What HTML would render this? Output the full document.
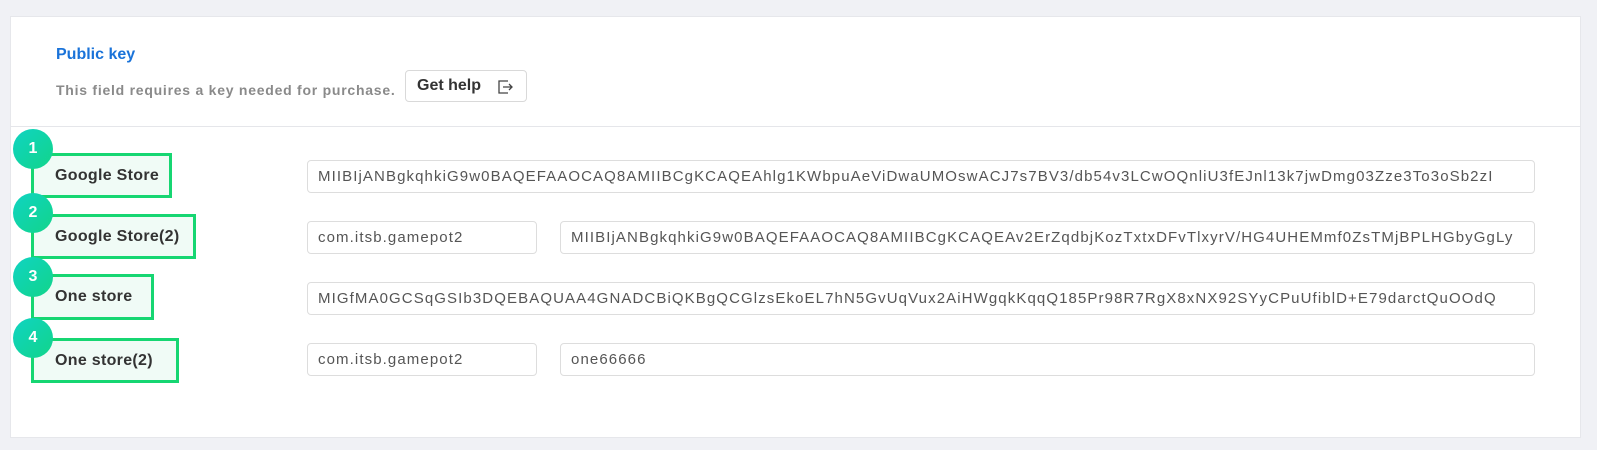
<!DOCTYPE html>
<html><head><meta charset="utf-8"><style>
*{margin:0;padding:0;box-sizing:border-box}
body{width:1597px;height:450px;background:#f0f1f5;font-family:"Liberation Sans",sans-serif;position:relative;overflow:hidden}
.card{position:absolute;left:10px;top:16px;width:1571px;height:422px;background:#fff;border:1px solid #e6e7eb}
.line{position:absolute;left:10px;top:126px;width:1571px;height:1px;background:#e5e6ea}
.t{position:absolute;left:56px;top:46px;font-size:16px;font-weight:bold;color:#1a73d9}
.d{position:absolute;left:56px;top:82px;font-size:14px;font-weight:bold;letter-spacing:0.75px;color:#8a8a8a;white-space:nowrap}
.btn{position:absolute;left:405px;top:70px;width:122px;height:32px;border:1px solid #d9d9d9;border-radius:4px;font-size:16px;font-weight:bold;color:#333;padding:6px 0 0 11px}
.btn svg{position:absolute;right:12px;top:9px}
.box{position:absolute;left:31px;border:3px solid #16d672;background:#f0fbf6;font-size:16px;font-weight:bold;letter-spacing:0.3px;color:#333;padding-left:21px;display:flex;align-items:center;white-space:nowrap}
.c{position:absolute;width:40px;height:40px;border-radius:50%;background:linear-gradient(135deg,#0fd3c2,#12d58a);color:#fff;font-weight:bold;font-size:16px;text-align:center;line-height:40px}
.in{position:absolute;height:33px;border:1px solid #ddd;border-radius:4px;font-size:15px;letter-spacing:1.1px;color:#555;padding:7px 10px 0;white-space:nowrap;overflow:hidden}
</style></head><body>
<div class="card"></div><div class="line"></div>
<div class="t">Public key</div>
<div class="d">This field requires a key needed for purchase.</div>
<div class="btn">Get help<svg width="16" height="14" viewBox="0 0 16 14" fill="none" stroke="#444" stroke-width="1.3"><path d="M10 1H1v12h9M5 7h9M11 4l3 3-3 3"/></svg></div>

<div class="box" style="top:153px;width:141px;height:45px">Google Store</div>
<div class="box" style="top:214px;width:165px;height:45px">Google Store(2)</div>
<div class="box" style="top:274px;width:123px;height:46px">One store</div>
<div class="box" style="top:338px;width:148px;height:45px">One store(2)</div>
<div class="c" style="left:13px;top:129px">1</div>
<div class="c" style="left:13px;top:193px">2</div>
<div class="c" style="left:13px;top:257px">3</div>
<div class="c" style="left:13px;top:318px">4</div>

<div class="in" style="left:307px;top:160px;width:1228px">MIIBIjANBgkqhkiG9w0BAQEFAAOCAQ8AMIIBCgKCAQEAhlg1KWbpuAeViDwaUMOswACJ7s7BV3/db54v3LCwOQnliU3fEJnl13k7jwDmg03Zze3To3oSb2zI</div>
<div class="in" style="left:307px;top:221px;width:230px">com.itsb.gamepot2</div>
<div class="in" style="left:560px;top:221px;width:975px">MIIBIjANBgkqhkiG9w0BAQEFAAOCAQ8AMIIBCgKCAQEAv2ErZqdbjKozTxtxDFvTlxyrV/HG4UHEMmf0ZsTMjBPLHGbyGgLy</div>
<div class="in" style="left:307px;top:282px;width:1228px">MIGfMA0GCSqGSIb3DQEBAQUAA4GNADCBiQKBgQCGlzsEkoEL7hN5GvUqVux2AiHWgqkKqqQ185Pr98R7RgX8xNX92SYyCPuUfiblD+E79darctQuOOdQ</div>
<div class="in" style="left:307px;top:343px;width:230px">com.itsb.gamepot2</div>
<div class="in" style="left:560px;top:343px;width:975px">one66666</div>
</body></html>
